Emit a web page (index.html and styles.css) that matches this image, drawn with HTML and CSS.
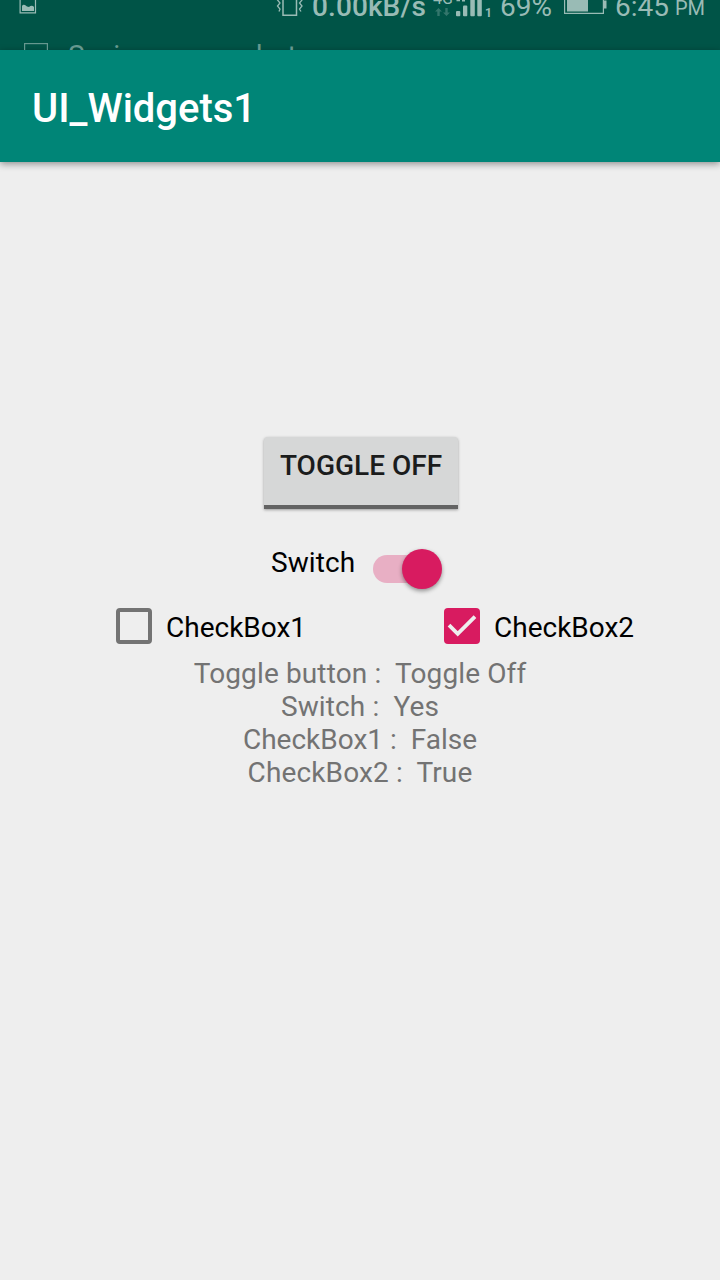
FILE: index.html
```
<!DOCTYPE html>
<html lang="en">
<head>
<meta charset="utf-8">
<title>UI_Widgets1</title>
<link rel="stylesheet" href="styles.css">
</head>
<body>
<div class="status">
  <div class="status-row">
    <svg class="ic-picture" width="18" height="20" viewBox="0 0 18 20"><path d="M1.100 0V18.900H16.500V0" fill="none" stroke="currentColor" stroke-width="1.200"/><path d="M3 17V12q1-2 3-1l2 1.500 2 .5q2-2 4-1l1 1v4z" fill="currentColor"/></svg>
    <svg class="ic-vibrate" width="27" height="22" viewBox="0 0 27 22" fill="none" stroke="currentColor"><path d="M7 0V21.200H20.500V0" stroke-width="1.500"/><path d="M2 0L4 2.500 1.500 6 4 9 1.500 12 4 15 3 17.500M25.500 0L23.500 2.500 26 6 23.500 9 26 12 23.500 15 25 17.500" stroke-width="1.300"/></svg>
    <span class="speed">0.00kB/s</span>
    <div class="network">
      <span class="network-label">4G</span>
      <svg width="15" height="9" viewBox="0 0 15 9" fill="currentColor"><path d="M3.500 0L7 3.500H4.700V8H2.300V3.500H0zM11.500 8L8 4.500H10.300V0H12.700V4.500H15z"/></svg>
    </div>
    <svg class="ic-signal" width="28" height="27" viewBox="0 0 28 27" fill="currentColor"><rect x="1" y="21" width="4.300" height="5.300" rx="1"/><rect x="8" y="15.500" width="4.300" height="10.800" rx="1"/><rect x="15.300" y="9" width="4.500" height="17.300" rx="1"/><rect x="22.300" y="0" width="4.500" height="26.300" rx="1"/><path d="M1.500 10h3.500v1.200H1.500zM7 10h3v1.500H7z"/></svg>
    <span class="sim">1</span>
    <span class="percent">69%</span>
    <svg class="ic-battery" width="44" height="20" viewBox="0 0 44 20"><path d="M.6 0V18.400H39.400V0" fill="none" stroke="currentColor" stroke-width="1.200"/><path d="M3 0H24V16.500H3zM39.500 5.500H42.500V13.500H39.500z" fill="currentColor"/></svg>
    <span class="clock">6:45</span>
    <span class="meridiem">PM</span>
  </div>
  <div class="ticker">
    <svg width="24" height="24" viewBox="0 0 24 24"><rect x=".6" y=".6" width="22.800" height="22.800" fill="none" stroke="currentColor" stroke-width="1.200"/></svg>
    <span>Saving screenshot...</span>
  </div>
</div>
<header class="appbar">UI_Widgets1</header>
<main class="content">
  <button class="toggle">TOGGLE OFF</button>
  <div class="switch-row">
    <span class="switch-label">Switch</span>
    <div class="track"><div class="thumb"></div></div>
  </div>
  <div class="checks">
    <label class="check"><span class="box"></span>CheckBox1</label>
    <label class="check"><span class="box box-on"><svg width="36" height="36" viewBox="0 0 36 36"><path d="M5 17.200L13.700 25.800L31 8.700" fill="none" stroke="#eee" stroke-width="3.800"/></svg></span>CheckBox2</label>
  </div>
  <div class="output"><div class="output-wide">Toggle button :  Toggle Off</div><div class="output-wide">Switch :  Yes</div><div>CheckBox1 :  False</div><div class="output-wide">CheckBox2 :  True</div></div>
</main>
</body>
</html>
```
FILE: styles.css
```
* { box-sizing: border-box; }
body {
  margin: 0;
  width: 720px;
  height: 1280px;
  overflow: hidden;
  background: #eee;
  color: #000;
  font: 28px/33px Roboto, sans-serif;
}
svg { display: block; flex: none; }
.status {
  height: 50px;
  overflow: hidden;
  background: #005447;
  color: #99bbb5;
}
.status-row {
  display: flex;
  align-items: flex-start;
  height: 32px;
  margin-top: -10px;
  white-space: nowrap;
}
.status-row > * { flex: none; }
.ic-picture { margin: 4px 0 0 19px; }
.ic-vibrate { margin: 4px 0 0 239px; }
.speed { width: 124px; margin-left: 9px; font-weight: 500; letter-spacing: .1px; }
.network { width: 20px; height: 30px; }
.network-label { display: block; height: 18px; font-size: 16px; line-height: 17px; margin-left: -3px; }
.network svg { color: #33766c; margin-left: -1px; }
.ic-signal { margin-left: -1px; }
.sim { width: 9px; margin: 11px 0 0 2px; font-size: 12px; font-weight: 700; line-height: 24px; }
.percent { width: 56px; margin-left: 6px; }
.ic-battery { margin: 5px 0 0 8px; }
.clock { width: 56px; margin-left: 7px; }
.meridiem { margin: 2px 0 0 4px; font-size: 20px; }
.ticker {
  display: flex;
  gap: 20px;
  padding: 21px 0 0 24px;
  color: #66988f;
}
.ticker span { margin-top: -4px; white-space: nowrap; }
.appbar {
  height: 112px;
  padding: 35px 32px 0;
  background: #008577;
  box-shadow: 0 2px 7px rgba(0, 0, 0, .4);
  color: #fff;
  font-size: 40px;
  font-weight: 500;
  line-height: 47px;
}
.content {
  display: flex;
  flex-direction: column;
  align-items: center;
  padding-top: 275px;
}
.toggle {
  width: 194px;
  height: 72px;
  margin-left: 2px;
  padding: 0 0 12px;
  border: 0;
  border-bottom: 4px solid #636363;
  border-radius: 4px 4px 0 0;
  background: #d6d7d7;
  box-shadow: 0 1px 3px rgba(0, 0, 0, .35);
  color: #1b1c1c;
  font: 500 28px/33px Roboto, sans-serif;
  white-space: nowrap;
}
.switch-row {
  display: flex;
  width: 180px;
  height: 61px;
  margin-top: 37px;
  padding-left: 1px;
}
.switch-label { width: 102px; letter-spacing: .1px; }
.track {
  width: 62px;
  height: 28px;
  margin-top: 9px;
  border-radius: 14px;
  background: #e8afc4;
}
.thumb {
  width: 40px;
  height: 40px;
  margin: -6px 0 0 29px;
  border-radius: 50%;
  background: #d81b60;
  box-shadow: 0 2px 4px rgba(0, 0, 0, .4);
}
.checks {
  display: flex;
  width: 720px;
  height: 50px;
  padding-left: 116px;
}
.check { display: flex; gap: 14px; width: 328px; flex: none; line-height: 41px; }
.check:last-child { width: 200px; }
.box {
  width: 36px;
  height: 36px;
  flex: none;
  margin-top: 1px;
  border: 4px solid #737373;
  border-radius: 4px;
}
.box-on { border: 0; background: #d81b60; }
.output {
  color: #737373;
  text-align: center;
  white-space: pre;
}
.output-wide { letter-spacing: .13px; }
```
